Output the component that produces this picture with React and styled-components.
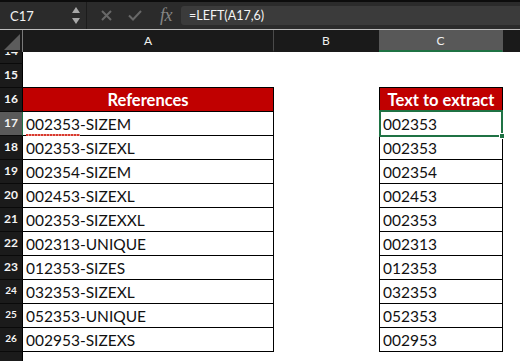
import React from 'react'
import styled, { createGlobalStyle } from 'styled-components'

const GlobalStyle = createGlobalStyle`
  html, body {
    margin: 0;
    padding: 0;
    background: #ffffff;
    overflow: hidden;
  }
  * {
    box-sizing: border-box;
  }
`

const COLS = '23px 251px 105px 124px 1fr'
const GREEN = '#1f7244'
const RED = '#c00000'

const Window = styled.div`
  width: 520px;
  height: 361px;
  overflow: hidden;
  display: flex;
  flex-direction: column;
  font-family: Lato, 'Open Sans', sans-serif;
`

const Toolbar = styled.div`
  height: 30px;
  flex: none;
  display: flex;
  align-items: center;
  background: #2b2b2b;
  border-top: 2px solid #0c0c0c;
  border-bottom: 1px solid #bdbdbd;
`

const NameBox = styled.div`
  width: 87px;
  height: 100%;
  display: flex;
  align-items: center;
  justify-content: space-between;
  padding: 0 6px 0 10px;
  border-right: 1px solid #1c1c1c;
  color: #f2f2f2;
  font-size: 13px;
`

const Spinner = styled.div`
  display: flex;
  flex-direction: column;
  gap: 5px;
  svg {
    display: block;
  }
`

const IconSlot = styled.div`
  display: flex;
  align-items: center;
  justify-content: center;
  width: ${(p) => p.$w}px;
  margin-left: ${(p) => p.$ml || 0}px;
  color: #686868;
`

const Fx = styled.span`
  font-family: 'Liberation Serif', serif;
  font-style: italic;
  font-size: 18px;
  color: #858585;
  letter-spacing: -0.5px;
`

const FormulaBox = styled.div`
  flex: 1;
  height: 19px;
  margin-left: 6px;
  display: flex;
  align-items: center;
  padding-left: 8px;
  background: #3b3b3b;
  border-radius: 3px 0 0 3px;
  color: #f5f5f5;
  font-size: 12.5px;
`

const Row = styled.div`
  display: grid;
  grid-template-columns: ${COLS};
  height: ${(p) => p.$h || 24}px;
  flex: none;
`

const ColHeader = styled(Row)`
  background: #1a1a1a;
  color: #f0f0f0;
  font-size: 12px;
`

const HeadCell = styled.div`
  display: flex;
  align-items: center;
  justify-content: center;
  position: relative;
  background: ${(p) => (p.$active ? '#585858' : 'transparent')};
  border-right: 1px solid ${(p) => (p.$divider ? '#4a4a4a' : 'transparent')};
  border-bottom: 2px solid ${(p) => (p.$active ? GREEN : 'transparent')};
`

const Corner = styled.div`
  display: flex;
  align-items: flex-end;
  justify-content: flex-end;
  padding: 0 2px 2px 0;
  border-right: 1px solid #7a7a7a;
`

const RowNum = styled.div`
  overflow: hidden;
  display: flex;
  align-items: flex-end;
  justify-content: center;
  background: ${(p) => (p.$active ? '#5a5a5a' : '#1b1b1b')};
  border-right: 1px solid ${(p) => (p.$active ? GREEN : '#000')};
  border-bottom: 1px solid #0a0a0a;
  color: #f4f4f4;
  font-weight: 700;
  font-size: ${(p) => (p.$small ? 10 : 12)}px;
  span {
    display: block;
    flex: none;
    height: 24px;
    line-height: 23px;
  }
`

const Cell = styled.div`
  position: relative;
  display: flex;
  align-items: center;
  padding-left: 3px;
  font-size: 15.5px;
  color: #111;
  white-space: nowrap;
  background: ${(p) => (p.$head ? RED : '#fff')};
  ${(p) =>
    p.$boxed &&
    `
    border-right: 1px solid #000;
    border-bottom: 1px solid #000;
  `}
  ${(p) => p.$boxed === 'c' && 'border-left: 1px solid #000;'}
  ${(p) =>
    p.$head &&
    `
    box-shadow: 0 -1px 0 #000;
    justify-content: center;
    padding-left: 0;
    color: #fff;
    font-weight: 700;
    font-size: 16.5px;
  `}
`

const Squiggle = styled.span`
  position: relative;
  &::after {
    content: '';
    position: absolute;
    z-index: 3;
    left: 0;
    right: 0;
    bottom: -3px;
    height: 2px;
    background: repeating-linear-gradient(90deg, #d8392e 0 2px, #eb9a92 2px 3px);
  }
`

const Selection = styled.div`
  position: absolute;
  top: -2px;
  left: -1px;
  right: -1px;
  bottom: -2px;
  border: 2px solid ${GREEN};
  z-index: 2;
  pointer-events: none;
`

const Handle = styled.div`
  position: absolute;
  right: -4px;
  bottom: -4px;
  width: 6px;
  height: 6px;
  background: ${GREEN};
  border: 1px solid #fff;
`

const Sheet = styled.div`
  display: flex;
  flex-direction: column;
`

const refs = [
  '002353-SIZEM',
  '002353-SIZEXL',
  '002354-SIZEM',
  '002453-SIZEXL',
  '002353-SIZEXXL',
  '002313-UNIQUE',
  '012353-SIZES',
  '032353-SIZEXL',
  '052353-UNIQUE',
  '002953-SIZEXS'
]

const Arrow = ({ down }) => (
  <svg width="8" height="6" viewBox="0 0 8 6">
    <path d={down ? 'M0 0h8L4 6z' : 'M0 6h8L4 0z'} fill="#a8a8a8" />
  </svg>
)

const App = () => (
  <Window>
    <GlobalStyle />
    <Toolbar>
      <NameBox>
        C17
        <Spinner>
          <Arrow />
          <Arrow down />
        </Spinner>
      </NameBox>
      <IconSlot $w={12} $ml={13}>
        <svg width="11" height="11" viewBox="0 0 11 11">
          <path d="M1 1l9 9M10 1l-9 9" stroke="currentColor" strokeWidth="2" />
        </svg>
      </IconSlot>
      <IconSlot $w={14} $ml={16}>
        <svg width="14" height="11" viewBox="0 0 14 11">
          <path d="M1 5.5l4 4L13 1" stroke="currentColor" strokeWidth="2" fill="none" />
        </svg>
      </IconSlot>
      <IconSlot $w={18} $ml={15}>
        <Fx>fx</Fx>
      </IconSlot>
      <FormulaBox>=LEFT(A17,6)</FormulaBox>
    </Toolbar>

    <Sheet>
      <ColHeader $h={22}>
        <Corner>
          <svg width="16" height="16" viewBox="0 0 16 16">
            <path d="M16 0v16H0z" fill="#5c5c5c" />
          </svg>
        </Corner>
        <HeadCell $divider>A</HeadCell>
        <HeadCell>B</HeadCell>
        <HeadCell $active>C</HeadCell>
        <HeadCell />
      </ColHeader>

      <Row $h={12}>
        <RowNum><span>14</span></RowNum>
        <Cell />
        <Cell />
        <Cell />
        <Cell />
      </Row>
      <Row>
        <RowNum><span>15</span></RowNum>
        <Cell />
        <Cell />
        <Cell />
        <Cell />
      </Row>
      <Row>
        <RowNum><span>16</span></RowNum>
        <Cell $boxed="a" $head>References</Cell>
        <Cell />
        <Cell $boxed="c" $head>Text to extract</Cell>
        <Cell />
      </Row>
      {refs.map((ref, i) => {
        const n = 17 + i
        const active = n === 17
        return (
          <Row key={ref}>
            <RowNum $active={active} $small={n >= 24}>
              <span>{n}</span>
            </RowNum>
            <Cell $boxed="a">
              {active ? (
                <>
                  <Squiggle>{ref.slice(0, 6)}</Squiggle>
                  {ref.slice(6)}
                </>
              ) : (
                ref
              )}
            </Cell>
            <Cell />
            <Cell $boxed="c">
              {ref.slice(0, 6)}
              {active && (
                <Selection>
                  <Handle />
                </Selection>
              )}
            </Cell>
            <Cell />
          </Row>
        )
      })}
      <Row>
        <RowNum />
        <Cell />
        <Cell />
        <Cell />
        <Cell />
      </Row>
    </Sheet>
  </Window>
)

export default App
